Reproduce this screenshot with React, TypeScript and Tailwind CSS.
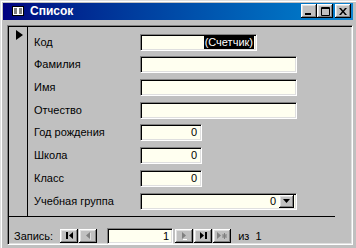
const raised =
  "shadow-[inset_-1px_-1px_0_#000,inset_1px_1px_0_#fff,inset_-2px_-2px_0_#808080,inset_2px_2px_0_#dfdfdf]";
const sunken =
  "border border-t-[#808080] border-l-[#808080] border-b-white border-r-white shadow-[inset_1px_1px_0_#000,inset_-1px_-1px_0_#dfdfdf]";

const fields: { label: string; kind: "counter" | "text" | "num" | "combo"; gap: string }[] = [
  { label: "Код", kind: "counter", gap: "mt-0" },
  { label: "Фамилия", kind: "text", gap: "mt-[5px]" },
  { label: "Имя", kind: "text", gap: "mt-[6px]" },
  { label: "Отчество", kind: "text", gap: "mt-[6px]" },
  { label: "Год рождения", kind: "num", gap: "mt-[5px]" },
  { label: "Школа", kind: "num", gap: "mt-[6px]" },
  { label: "Класс", kind: "num", gap: "mt-[6px]" },
  { label: "Учебная группа", kind: "combo", gap: "mt-[6px]" },
];

function Field({ kind }: { kind: string }) {
  if (kind === "counter") {
    return (
      <div className={`w-[117px] h-[17px] bg-[#fffff0] ${sunken} flex items-center justify-end pr-[2px]`}>
        <span className="bg-black text-white leading-[13px] px-[1px]">(Счетчик)</span>
      </div>
    );
  }
  if (kind === "num") {
    return (
      <div className={`w-[62px] h-[17px] bg-[#fffff0] ${sunken} flex items-center justify-end pr-[4px]`}>
        0
      </div>
    );
  }
  if (kind === "combo") {
    return (
      <div className={`w-[157px] h-[17px] bg-[#fffff0] ${sunken} flex items-center justify-end p-[2px]`}>
        <span className="mr-[3px]">0</span>
        <div className={`w-[15px] h-[13px] bg-[#c0c0c0] ${raised} flex items-center justify-center`}>
          <svg width="7" height="4" viewBox="0 0 7 4">
            <path d="M0 0h7L3.5 4z" fill="#000" />
          </svg>
        </div>
      </div>
    );
  }
  return <div className={`w-[157px] h-[17px] bg-[#fffff0] ${sunken}`} />;
}

function NavBtn({ children }: { children: React.ReactNode }) {
  return (
    <div className={`w-[18px] h-[14px] bg-[#c0c0c0] ${raised} flex items-center justify-center`}>
      {children}
    </div>
  );
}

export default function App() {
  return (
    <div
      className="w-[356px] h-[248px] bg-[#c0c0c0] flex flex-col p-[3px] shadow-[inset_1px_1px_0_#dfdfdf,inset_2px_2px_0_#fff]"
      style={{ fontFamily: '"Liberation Sans", Arial, sans-serif' }}
    >
      {/* title bar */}
      <div className="h-[18px] flex items-center bg-gradient-to-r from-[#000080] to-[#1084d0] pl-[9px] pr-[2px]">
        <svg width="12" height="10" viewBox="0 0 12 10" className="mr-[6px]">
          <rect x="0.5" y="0.5" width="11" height="9" fill="#fff" stroke="#000" />
          <path d="M2 3h3M2 5h3M2 7h3M7 3h3M7 5h3M7 7h3" stroke="#000" />
        </svg>
        <span className="text-white font-bold text-[12px] leading-none">Список</span>
        <div className="ml-auto flex items-center">
          <div className={`w-[16px] h-[14px] bg-[#c0c0c0] ${raised} flex items-end justify-center pb-[3px]`}>
            <div className="w-[6px] h-[2px] bg-black ml-[-2px]" />
          </div>
          <div className={`w-[16px] h-[14px] bg-[#c0c0c0] ${raised} flex items-center justify-center`}>
            <svg width="9" height="9" viewBox="0 0 9 9">
              <path d="M0.5 0.5h8v8h-8z" fill="none" stroke="#000" />
              <path d="M0 1.5h9" stroke="#000" />
            </svg>
          </div>
          <div className={`w-[16px] h-[14px] bg-[#c0c0c0] ${raised} flex items-center justify-center ml-[2px]`}>
            <svg width="8" height="7" viewBox="0 0 8 7">
              <path d="M0 0h2l2 2.5L6 0h2L5 3.5 8 7H6L4 4.5 2 7H0l3-3.5z" fill="#000" />
            </svg>
          </div>
        </div>
      </div>

      {/* client area */}
      <div className="mt-[5px] ml-[4px] flex-1 flex flex-col border border-t-[#808080] border-l-[#808080] border-b-white border-r-white shadow-[inset_1px_1px_0_#000,inset_-1px_-1px_0_#dfdfdf] pt-[1px] pl-[1px] text-[11px] text-black">
        <div className="h-[190px] w-[326px] flex border-b border-black">
          {/* record selector */}
          <div className="w-[19px] border-r border-black flex justify-center pt-[3px]">
            <svg width="7" height="10" viewBox="0 0 7 10" className="ml-[3px]">
              <path d="M0 0l7 5L0 10z" fill="#000" />
            </svg>
          </div>
          <div className="flex flex-col pt-[7px] pl-[6px]">
            {fields.map((f) => (
              <div key={f.label} className={`flex items-center h-[17px] ${f.gap}`}>
                <span className="w-[106px]">{f.label}</span>
                <Field kind={f.kind} />
              </div>
            ))}
          </div>
        </div>

        {/* navigation */}
        <div className="flex-1 flex items-center pl-[5px] pt-[11px]">
          <span className="mr-[7px]">Запись:</span>
          <NavBtn>
            <svg width="7" height="7" viewBox="0 0 7 7">
              <path d="M0 0h2v7H0zM7 0v7L3 3.5z" fill="#000" />
            </svg>
          </NavBtn>
          <div className="ml-[1px]">
            <NavBtn>
              <svg width="5" height="8" viewBox="0 0 5 8">
                <path d="M4 0v7L0 3.5z" fill="#808080" />
                <path d="M5 1v7" stroke="#fff" />
              </svg>
            </NavBtn>
          </div>
          <div className={`ml-[10px] w-[66px] h-[16px] bg-[#fffff0] ${sunken} flex items-center justify-end pr-[3px]`}>
            1
          </div>
          <div className="ml-[2px]">
            <NavBtn>
              <svg width="5" height="8" viewBox="0 0 5 8">
                <path d="M0 0v7l4-3.5z" fill="#808080" />
                <path d="M1 7.5h4" stroke="#fff" />
              </svg>
            </NavBtn>
          </div>
          <div className="ml-[1px]">
            <NavBtn>
              <svg width="7" height="7" viewBox="0 0 7 7">
                <path d="M0 0v7l4-3.5zM5 0h2v7H5z" fill="#000" />
              </svg>
            </NavBtn>
          </div>
          <div className="ml-[1px]">
            <NavBtn>
              <svg width="11" height="8" viewBox="0 0 11 8">
                <path d="M0 0v7l4-3.5z" fill="#808080" />
                <path d="M7.5 1v6M5 4h5M5.5 2l4 4M9.5 2l-4 4" stroke="#808080" />
              </svg>
            </NavBtn>
          </div>
          <span className="ml-[7px]">из&nbsp;&nbsp;1</span>
        </div>
      </div>
    </div>
  );
}
